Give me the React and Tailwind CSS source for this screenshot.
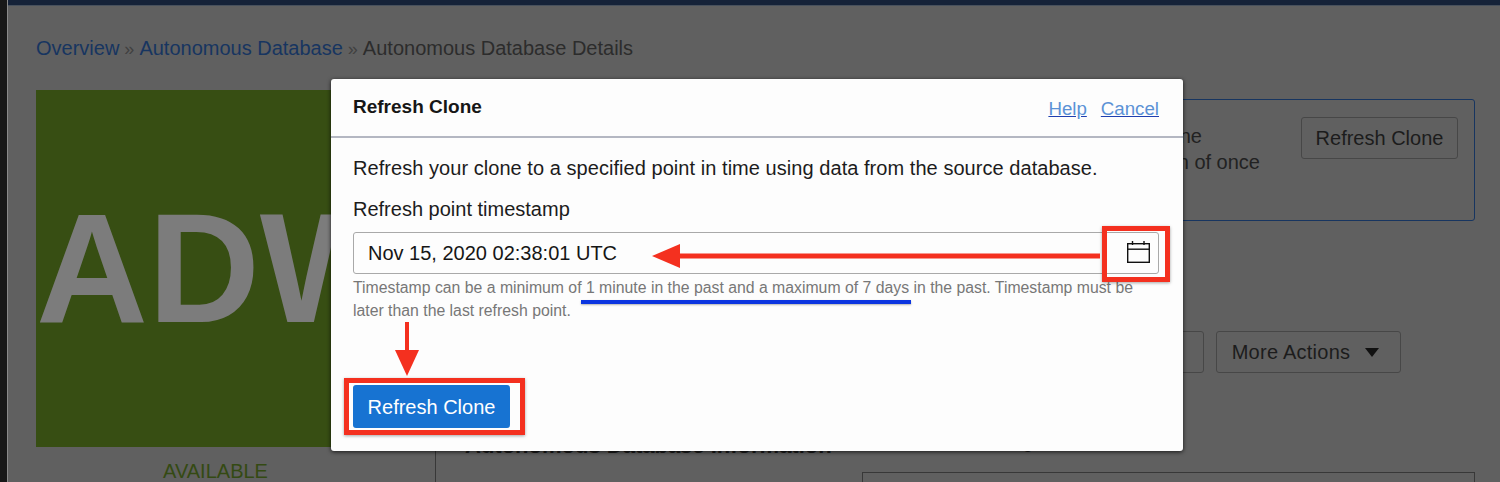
import React from "react";

const font = { sans: "font-['Liberation_Sans',Arial,sans-serif]" };

const CalendarIcon = () => (
  <svg className="-mt-[2px]" width="25" height="24" viewBox="0 0 25 24" fill="none" stroke="#111" strokeWidth="1.4">
    <rect x="1.7" y="3.7" width="21.6" height="18.6" />
    <path d="M1.7 9.2H23.3" />
    <path d="M6.5 1V5M18 1V5" />
  </svg>
);

const OutlineButton = ({ children, className }) => (
  <button className={`h-[42px] rounded-[3px] border border-[#474747] text-[20px] text-[#1c1c1c] ${className}`}>
    {children}
  </button>
);

const Background = () => (
  <div className="flex h-full w-full">
    <div className="w-[8px] shrink-0 border-r border-[#8a8a8a] bg-[#181818]" />
    <div className="flex min-w-0 flex-1 flex-col">
      <div className="h-[6px] shrink-0 border-b border-[#47505c] bg-[#152238]" />
      <div className="min-h-0 flex-1 pl-[28px] pr-[25px]">
        <div className="mt-[31px] h-[23px] text-[20px] leading-[23px] text-[#2c2c2c]">
          <span className="text-[#173560]">Overview</span>
          <span className="text-[18px] text-[#404040]"> » </span>
          <span className="text-[#173560]">Autonomous Database</span>
          <span className="text-[18px] text-[#404040]"> » </span>
          Autonomous Database Details
        </div>
        <div className="mt-[30px] flex">
          <div className="w-[359px] shrink-0">
            <div className="flex h-[357px] items-center overflow-hidden whitespace-nowrap bg-[#374e13] pt-[1px] text-[155px] font-bold text-[#7c7c7c]">
              ADW
            </div>
            <div className="mt-[13px] text-center text-[20px] leading-[22px] text-[#344a13]">AVAILABLE</div>
          </div>
          <div className="ml-[40px] min-w-0 flex-1 border-l border-[#383838] pl-[29px]">
            <div className="mt-[9px] flex h-[122px] rounded-[3px] border border-[#173560] pr-[16px] pt-[17px]">
              <div className="flex-1 pr-[41px] pt-[6px] text-right text-[20px] leading-[26px] text-[#222]">
                <div className="pr-[58px]">This database is a refreshable clone</div>
                <div>Refresh is run on demand with the option of once</div>
              </div>
              <OutlineButton className="w-[157px]">Refresh Clone</OutlineButton>
            </div>
            <div className="mt-[110px] flex justify-end gap-[12px] pr-[74px]">
              <OutlineButton className="w-[180px]">DB Connection</OutlineButton>
              <OutlineButton className="flex w-[185px] items-center justify-center gap-[15px] pr-[6px] tracking-[0.25px]">
                More Actions
                <svg width="14" height="9" viewBox="0 0 14 9">
                  <path d="M0 0H14L7 9Z" fill="#111" />
                </svg>
              </OutlineButton>
            </div>
            <div className="mt-[60px] flex items-start text-[22px] font-bold leading-[26px] text-[#1c1c1c]">
              <span>Autonomous Database Information</span>
              <span className="ml-[125px] text-[18px] font-normal leading-[18px]">Licensing</span>
            </div>
            <div className="ml-[397px] mt-[13px] h-[40px] border border-[#383838]" />
          </div>
        </div>
      </div>
    </div>
  </div>
);

const Dialog = () => (
  <div className="absolute left-[331px] top-[79px] flex h-[372px] w-[852px] flex-col rounded-[3px] bg-[#fdfdfd] shadow-[0_1px_4px_rgba(0,0,0,0.75)]">
    <div className="flex h-[59px] shrink-0 items-center justify-between border-b-2 border-[#b4b7c2] pl-[22px] pr-[24px]">
      <div className="text-[19px] font-bold text-[#161616]">Refresh Clone</div>
      <div className="flex gap-[14px] pt-[3px] text-[18.7px] text-[#5b92d6]">
        <span className="underline decoration-[#1f3fb0]">Help</span>
        <span className="underline decoration-[#1f3fb0]">Cancel</span>
      </div>
    </div>
    <div className="flex flex-1 flex-col pl-[22px] pr-[24px]">
      <p className="mt-[19px] text-[20px] leading-[22px] tracking-[0.05px] text-[#1c1c1c]">
        Refresh your clone to a specified point in time using data from the source database.
      </p>
      <label className="mt-[19px] text-[20px] leading-[22px] text-[#1c1c1c]">Refresh point timestamp</label>
      <div className="mt-[12px] flex h-[42px] items-center justify-between rounded-[3px] border border-[#a9a9a9] pl-[14px] pr-[7px] text-[20px] text-[#161616]">
        <span>Nov 15, 2020 02:38:01 UTC</span>
        <CalendarIcon />
      </div>
      <p className="mt-[2px] text-[15.8px] leading-[23px] text-[#777]">
        Timestamp can be a minimum of 1 minute in the past and a maximum of 7 days in the past. Timestamp must be
        later than the last refresh point.
      </p>
      <button className="mt-[63px] h-[43px] w-[157px] rounded-[3px] bg-[#1773d2] text-[20px] text-white">
        Refresh Clone
      </button>
    </div>
  </div>
);

// red and blue marks drawn on top of the screenshot
const Annotations = () => (
  <>
    <div className="absolute left-[1102px] top-[226px] h-[56px] w-[68px] border-[5px] border-[#f4301f] shadow-[0_1px_3px_rgba(0,0,0,0.35)]" />
    <div className="absolute left-[344px] top-[378px] h-[57px] w-[181px] border-[5px] border-[#f4301f] shadow-[0_1px_3px_rgba(0,0,0,0.35)]" />
    <div className="absolute left-[581px] top-[300px] h-[4px] w-[330px] bg-[#0b35e0] shadow-[0_1px_2px_rgba(0,0,0,0.3)]" />
    <svg className="absolute left-[650px] top-[240px]" width="452" height="32" viewBox="0 0 452 32">
      <path d="M30 13.5H450V18.5H30Z" fill="#f4301f" />
      <path d="M2 16L30 4V28Z" fill="#f4301f" />
    </svg>
    <svg className="absolute left-[394px] top-[320px]" width="26" height="58" viewBox="0 0 26 58">
      <path d="M11 2H15V32H11Z" fill="#f4301f" />
      <path d="M13 56L1 30H25Z" fill="#f4301f" />
    </svg>
  </>
);

const App = () => {
  return (
    <div className={`relative h-[482px] w-[1500px] overflow-hidden bg-[#606060] ${font.sans}`}>
      <Background />
      <Dialog />
      <Annotations />
    </div>
  );
};

export default App;
